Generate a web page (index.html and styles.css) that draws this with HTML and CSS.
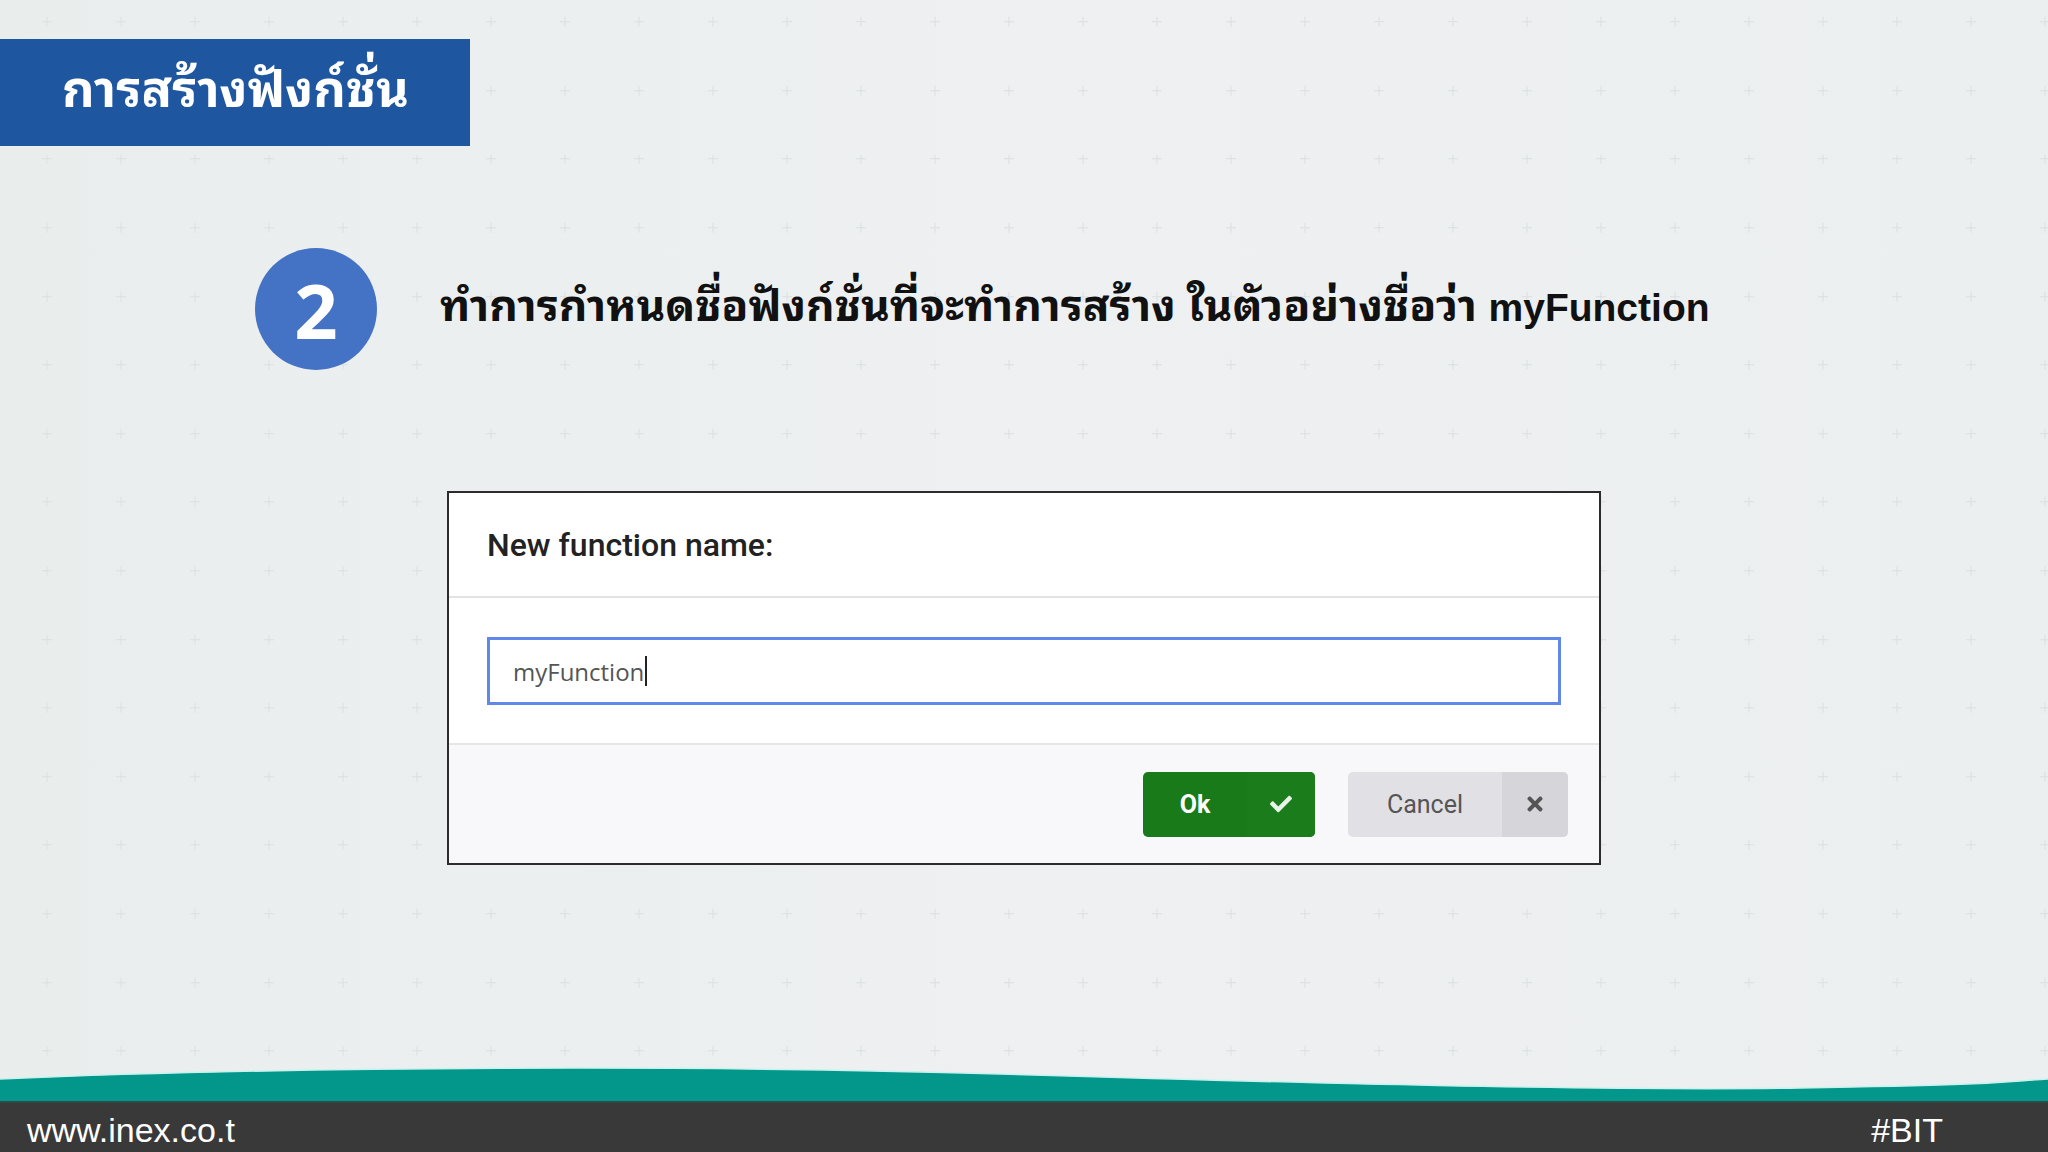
FILE: index.html
```html
<!DOCTYPE html>
<html lang='th'>
<head>
    <meta charset='UTF-8'>
    <meta name='viewport' content='width=device-width, initial-scale=1.0'>
    <title>การสร้างฟังก์ชั่น</title>

    <link rel="stylesheet" href="styles.css">
</head>
<body>
    <div class="slide">
        <header class="title_bar">
            <h1>การสร้างฟังก์ชั่น</h1>
        </header>

        <section class="step">
            <div class="step_num">2</div>
            <p class="step_text">ทำการกำหนดชื่อฟังก์ชั่นที่จะทำการสร้าง ในตัวอย่างชื่อว่า <b>myFunction</b></p>
        </section>

        <div class="dialog">
            <div class="dialog_head">New function name:</div>
            <div class="dialog_body">
                <div class="name_input">myFunction<span class="caret"></span></div>
            </div>
            <div class="dialog_foot">
                <button class="btn btn_ok">
                    <span class="btn_label">Ok</span>
                    <span class="btn_icon">
                        <svg width="22" height="22" viewBox="0 0 512 512"><path fill="#e9f3e9" d="M173.9 439.4l-166.4-166.4c-10-10-10-26.2 0-36.2l36.2-36.2c10-10 26.2-10 36.2 0L192 312.7 432.1 72.6c10-10 26.2-10 36.2 0l36.2 36.2c10 10 10 26.2 0 36.2l-294.4 294.4c-10 10-26.2 10-36.2 0z"/></svg>
                    </span>
                </button>
                <button class="btn btn_cancel">
                    <span class="btn_label">Cancel</span>
                    <span class="btn_icon">
                        <svg width="16" height="22" viewBox="0 0 352 512"><path fill="#555" d="M242.7 256l100.1-100.1c12.3-12.3 12.3-32.2 0-44.5l-22.2-22.2c-12.3-12.3-32.2-12.3-44.5 0L176 189.3 75.9 89.2c-12.3-12.3-32.2-12.3-44.5 0L9.2 111.5c-12.3 12.3-12.3 32.2 0 44.5L109.3 256 9.2 356.1c-12.3 12.3-12.3 32.2 0 44.5l22.2 22.2c12.3 12.3 32.2 12.3 44.5 0L176 322.7l100.1 100.1c12.3 12.3 32.2 12.3 44.5 0l22.2-22.2c12.3-12.3 12.3-32.2 0-44.5L242.7 256z"/></svg>
                    </span>
                </button>
            </div>
        </div>

        <footer class="footer">
            <svg class="wave" viewBox="0 0 2048 36" preserveAspectRatio="none">
                <path d="M0 14 C300 1 700 0 1000 9 S1600 26 1800 23 S2000 17 2048 14 V36 H0 Z" fill="#03968a"/>
                <path d="M0 14 C300 1 700 0 1000 9 S1600 26 1800 23 S2000 17 2048 14" fill="none" stroke="#c8f2ee" stroke-width="1.5"/>
            </svg>
            <div class="footer_bar">
                <span>www.inex.co.t</span>
                <span>#BIT</span>
            </div>
        </footer>
    </div>
</body>
</html>
```

FILE: styles.css
```css
html, body
{
    margin: 0;
    padding: 0;
}
body
{
    width: 2048px;
    height: 1152px;
    overflow: hidden;
    font-family: 'Noto Sans Thai Looped', 'Noto Sans Thai', 'Noto Sans', 'Liberation Sans', sans-serif;
    background-color: #ecf0f0;
    background-image:
        url("data:image/svg+xml,%3Csvg xmlns='http://www.w3.org/2000/svg' width='74' height='68.6'%3E%3Cpath d='M37 29.5v10M32 34.5h10' stroke='%23dbe0e1' stroke-width='1'/%3E%3C/svg%3E"),
        linear-gradient(90deg, #e9eeed, #eef0f2 50%, #eceff0);
    background-size: 74px 68.6px, 100% 100%;
    background-position: 10px -12.5px, 0 0;
}
.slide
{
    height: 1152px;
    display: flex;
    flex-direction: column;
    align-items: flex-start;
}
.title_bar
{
    margin-top: 39px;
    width: 470px;
    height: 107px;
    box-sizing: border-box;
    padding: 0 0 14px 62px;
    display: flex;
    align-items: center;
    background: #1f56a0;
}
.title_bar h1
{
    margin: 0;
    color: #fff;
    font-size: 50.5px;
    font-weight: 700;
    line-height: 1;
}
.step
{
    margin-top: 102px;
    margin-left: 255px;
    display: flex;
    align-items: center;
    gap: 63px;
}
.step_num
{
    width: 122px;
    height: 122px;
    border-radius: 50%;
    background: #4472c4;
    color: #fff;
    font-family: 'Open Sans', sans-serif;
    font-weight: 700;
    font-size: 76px;
    display: flex;
    align-items: center;
    justify-content: center;
}
.step_text
{
    margin: 0 0 16px 0;
    color: #111;
    font-size: 44.2px;
    font-weight: 700;
}
.step_text b
{
    font-family: 'Liberation Sans', Arial, sans-serif;
    font-size: 39px;
}
.dialog
{
    margin-top: 121px;
    margin-left: 447px;
    width: 1154px;
    height: 374px;
    box-sizing: border-box;
    border: 2px solid #2c2c2c;
    background: #fff;
    display: flex;
    flex-direction: column;
    font-family: 'Roboto', sans-serif;
}
.dialog_head
{
    height: 105px;
    box-sizing: border-box;
    padding-left: 38px;
    display: flex;
    align-items: center;
    font-size: 32px;
    font-weight: 500;
    color: #222;
    border-bottom: 2px solid #e2e2e2;
}
.dialog_body
{
    padding: 39px 38px 38px 38px;
    border-bottom: 2px solid #e6e6e8;
}
.name_input
{
    width: 1074px;
    height: 68px;
    box-sizing: border-box;
    border: 3px solid #5f88ea;
    padding-left: 23px;
    display: flex;
    align-items: center;
    font-family: 'Open Sans', sans-serif;
    font-size: 24px;
    color: #555;
}
.caret
{
    display: inline-block;
    width: 2px;
    height: 30px;
    margin-left: 1px;
    background: #222;
}
.dialog_foot
{
    flex: 1;
    background: #f8f8fa;
    display: flex;
    align-items: center;
    justify-content: flex-end;
    gap: 33px;
    padding-right: 31px;
}
.btn
{
    height: 65px;
    padding: 0;
    border: none;
    border-radius: 5px;
    display: flex;
    overflow: hidden;
    font-family: 'Roboto', sans-serif;
    font-size: 25px;
}
.btn_label, .btn_icon
{
    display: flex;
    align-items: center;
    justify-content: center;
    height: 100%;
}
.btn_ok
{
    background: #187a19;
    color: #fff;
    font-weight: 700;
}
.btn_ok .btn_label
{
    width: 104px;
}
.btn_ok .btn_icon
{
    width: 68px;
    background: #1a7c1b;
}
.btn_cancel
{
    background: #e1e1e5;
    color: #555;
}
.btn_cancel .btn_label
{
    width: 154px;
}
.btn_cancel .btn_icon
{
    width: 66px;
    background: #d6d6da;
}
.footer
{
    margin-top: auto;
    width: 100%;
}
.wave
{
    display: block;
    width: 100%;
    height: 36px;
}
.footer_bar
{
    height: 51px;
    box-sizing: border-box;
    padding: 6px 105px 0 27px;
    background: #3a3939;
    border-top: 2px solid #2f4a46;
    display: flex;
    align-items: center;
    justify-content: space-between;
    color: #fff;
    font-family: 'Liberation Sans', Arial, sans-serif;
    font-size: 34px;
}
```
